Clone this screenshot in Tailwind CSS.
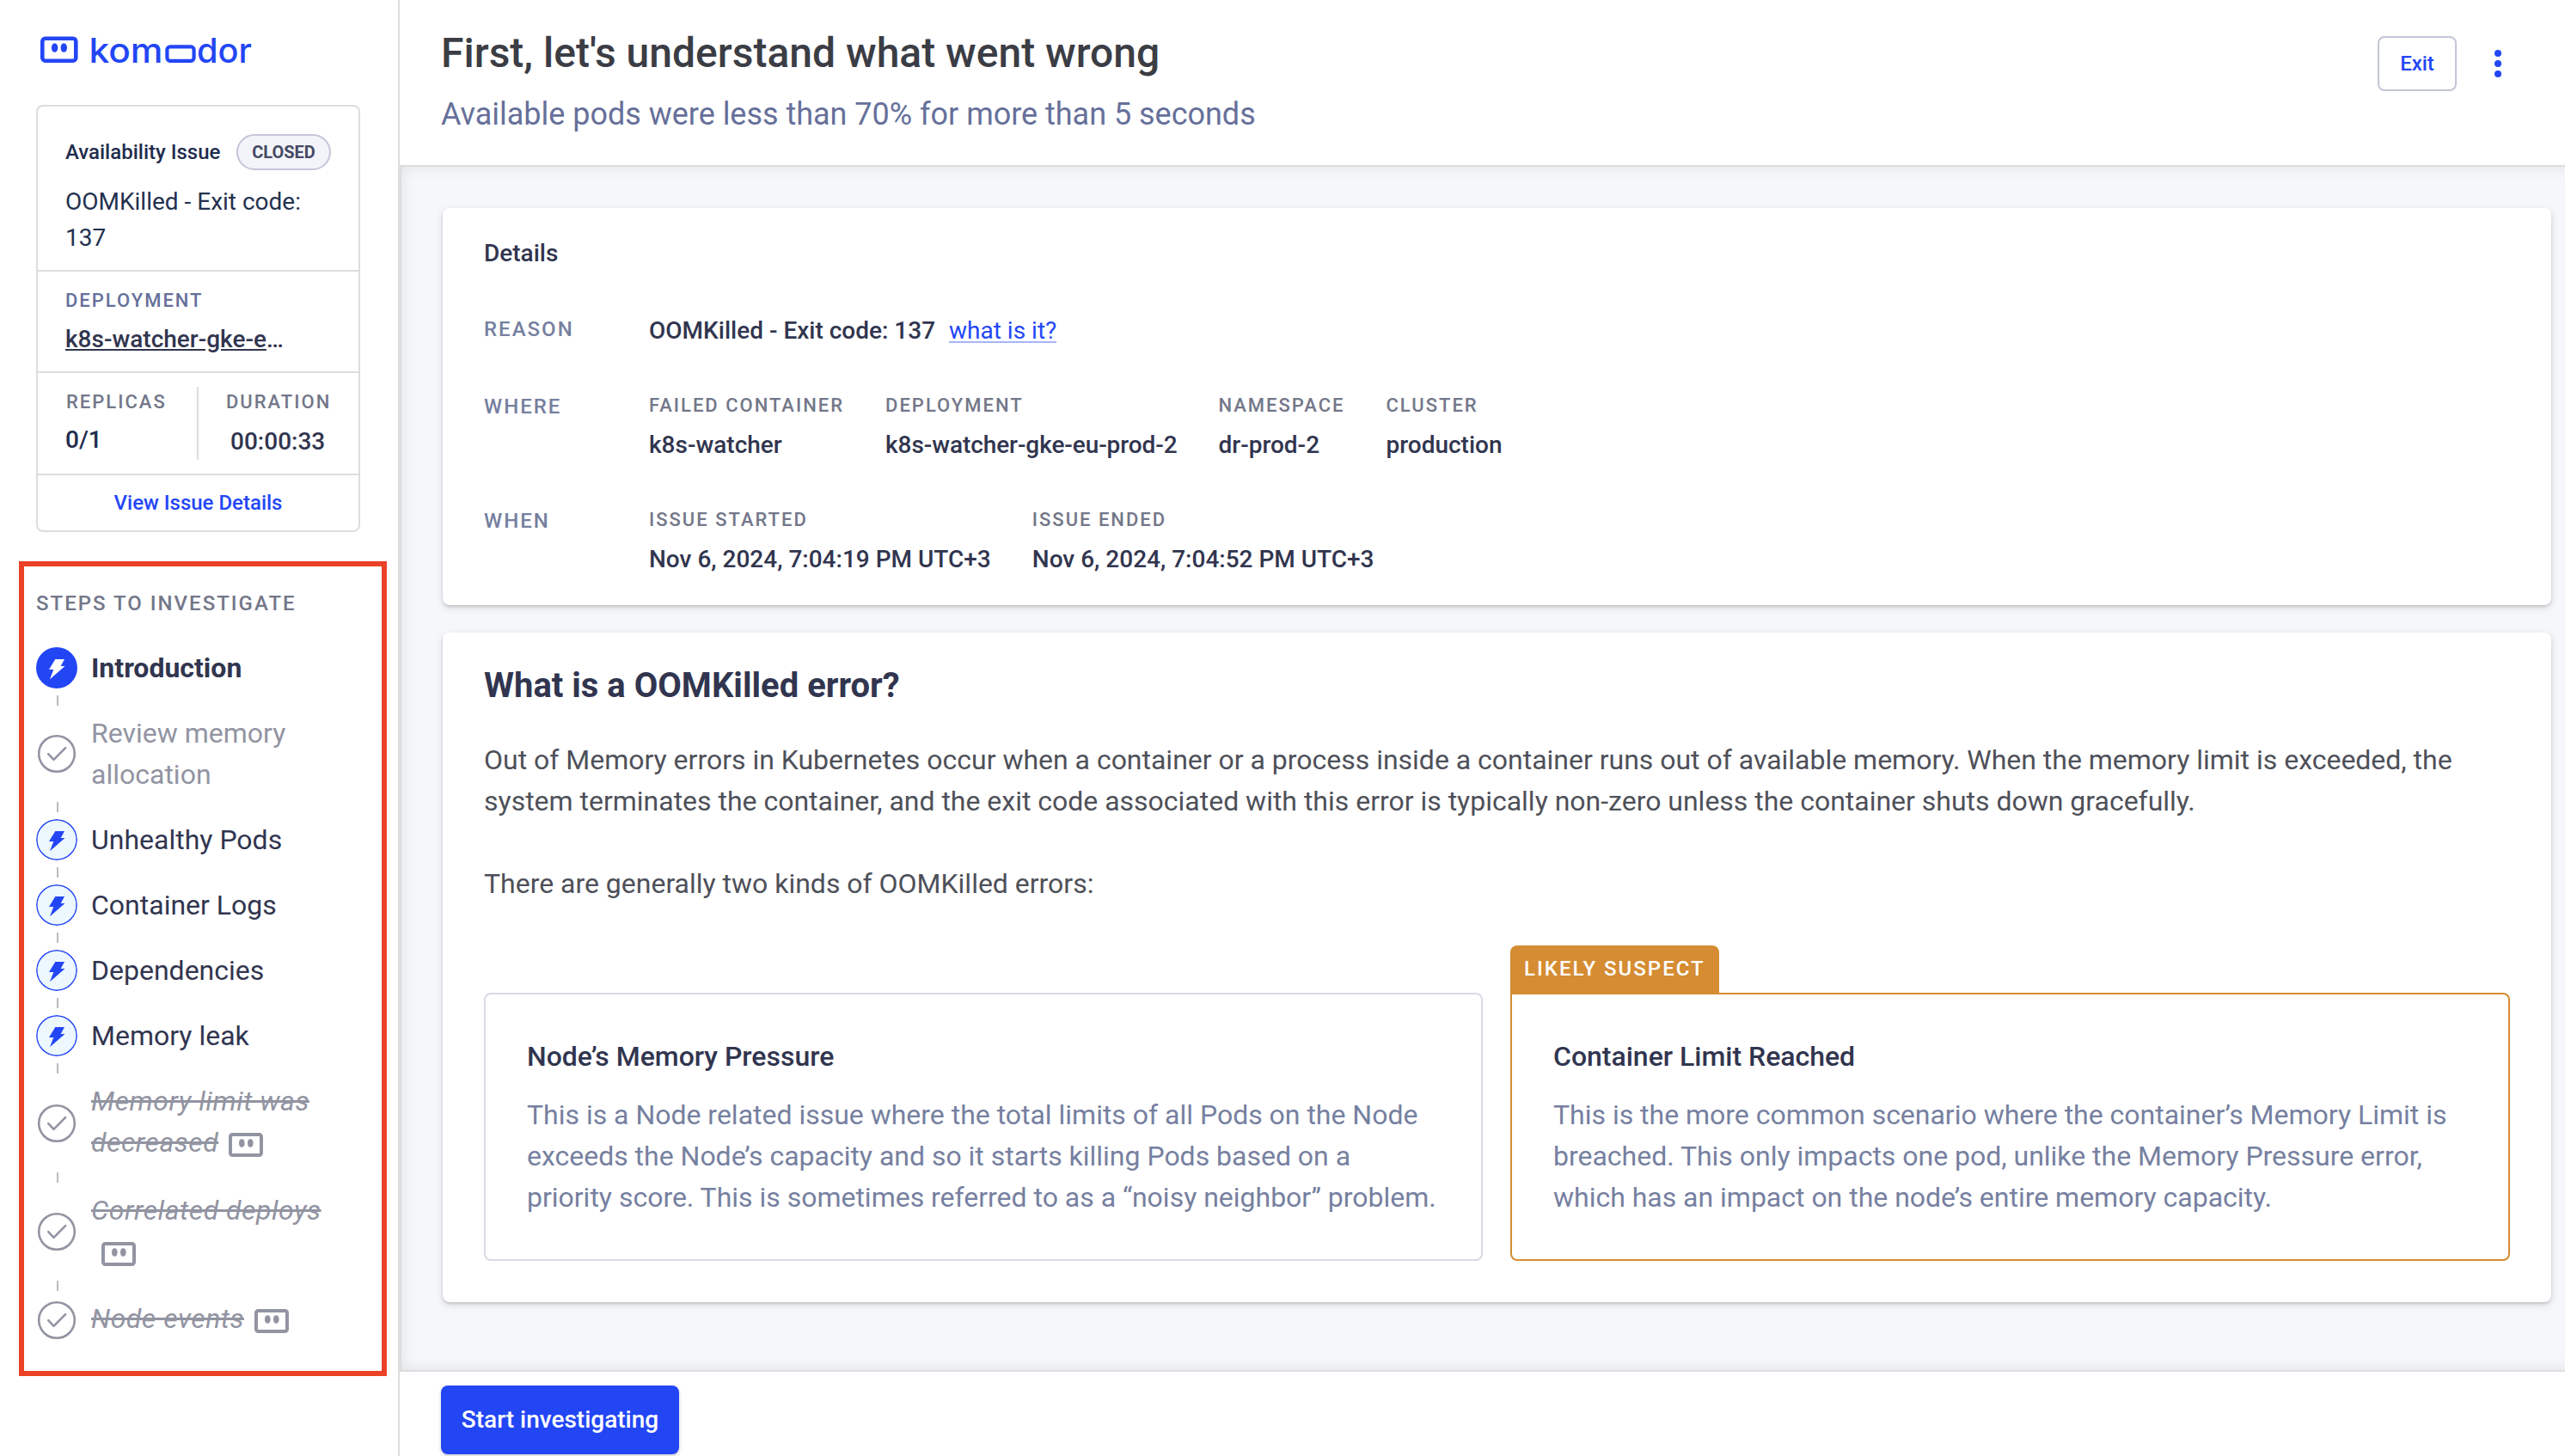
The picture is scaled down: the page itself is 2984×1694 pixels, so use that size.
<!DOCTYPE html>
<html lang="en">
<head>
  <meta charset="UTF-8" />
  <title>Komodor - OOMKilled</title>
  <script src="https://cdn.jsdelivr.net/npm/@tailwindcss/browser@4"></script>
</head>
<body class="bg-white h-[1694px] overflow-hidden flex font-['Roboto',sans-serif] text-[#31354f]">
  <!-- shared icons -->
  <svg class="hidden">
    <symbol id="bolt" viewBox="0 0 48 48"><path d="M22.3 14H33l-4.3 8h4.8L16 37.2l4.3-11.2H15z" fill="currentColor" /></symbol>
    <symbol id="bolt-open" viewBox="0 0 48 48">
      <circle cx="24" cy="24" r="23.2" fill="#ecf7fe" stroke="currentColor" stroke-width="1.5" />
      <path d="M22.3 14H33l-4.3 8h4.8L16 37.2l4.3-11.2H15z" fill="currentColor" />
    </symbol>
    <symbol id="check" viewBox="0 0 48 48">
      <circle cx="24" cy="24" r="20.8" fill="none" stroke="currentColor" stroke-width="2.6" />
      <path d="M14.2 24.2l6.3 6.6 13.6-13.6" fill="none" stroke="currentColor" stroke-width="2.6" stroke-linecap="round" stroke-linejoin="round" />
    </symbol>
    <symbol id="mask" viewBox="0 0 40 28">
      <rect x="2" y="2" width="36" height="24" rx="2.5" fill="none" stroke="currentColor" stroke-width="4" />
      <ellipse cx="15.3" cy="12" rx="3.3" ry="4.8" fill="currentColor" />
      <ellipse cx="25.3" cy="12" rx="3.3" ry="4.8" fill="currentColor" />
    </symbol>
  </svg>

  <aside class="w-[465px] shrink-0 border-r-2 border-[#dcdddf]">
    <div class="pt-[42px] pl-[47px] h-[122px]">
      <svg class="text-[#2346f5] overflow-visible" width="260" height="60" viewBox="0 0 260 60">
        <rect x="2.3" y="2.7" width="39" height="26" rx="3.5" fill="none" stroke="currentColor" stroke-width="4.6" />
        <ellipse cx="16.6" cy="13.5" rx="3.7" ry="5.3" fill="currentColor" />
        <ellipse cx="27.3" cy="13.5" rx="3.7" ry="5.3" fill="currentColor" />
        <g fill="currentColor" font-family="Inter, sans-serif" font-size="39" font-weight="500">
          <text x="56.5" y="30.5" textLength="86" lengthAdjust="spacingAndGlyphs">kom</text>
          <text x="182" y="30.5" textLength="64" lengthAdjust="spacingAndGlyphs">dor</text>
        </g>
        <rect x="147.4" y="12.4" width="31.2" height="16.4" rx="3.5" fill="none" stroke="currentColor" stroke-width="4.2" />
      </svg>
    </div>

    <div class="ml-[42px] w-[377px] h-[497px] border-2 border-[#dcdddf] rounded-lg">
      <div class="h-[192px] border-b-2 border-[#dcdddf] pt-8 pl-8">
        <div class="flex items-center justify-between pr-8">
          <span class="text-2xl leading-7 font-medium text-[#1f2c4d]">Availability Issue</span>
          <span class="w-[110px] h-[42px] rounded-full border-2 border-[#c4c6d8] bg-[#f3f4fa] flex items-center justify-center text-xl font-bold text-[#454a63]">CLOSED</span>
        </div>
        <div class="mt-4 text-[28px] leading-[42px] text-[#24314f]">OOMKilled - Exit code:<br />137</div>
      </div>
      <div class="h-[118px] border-b-2 border-[#dcdddf] pt-[21px] pl-8">
        <div class="text-[22px] leading-[26px] font-medium tracking-[2px] text-[#66709a]">DEPLOYMENT</div>
        <div class="mt-4 text-[28px] leading-8 font-medium"><span class="underline">k8s-watcher-gke-e</span>…</div>
      </div>
      <div class="h-[119px] border-b-2 border-[#dcdddf] pt-4 pl-8 flex">
        <div class="w-[153px] pt-[5px]">
          <div class="pl-px text-[22px] leading-[26px] font-medium tracking-[2px] text-[#737789]">REPLICAS</div>
          <div class="mt-[15px] text-[28px] leading-8 font-medium text-[#1f2c4d]">0/1</div>
        </div>
        <div class="h-[85px] border-l-2 border-[#dcdddf] pt-[5px] pl-8">
          <div class="text-[22px] leading-[26px] font-medium tracking-[2px] text-[#737789]">DURATION</div>
          <div class="mt-[17px] pl-[5px] text-[28px] leading-8 font-medium">00:00:33</div>
        </div>
      </div>
      <div class="h-16 flex items-center justify-center text-2xl leading-7 font-medium text-[#2346f5]">View Issue Details</div>
    </div>

    <div class="mt-[34px] ml-[22px] w-[428px] h-[948px] border-[6px] border-[#ea4127] pl-3.5 pt-[29px]">
      <div class="text-2xl leading-7 font-medium tracking-[2px] text-[#737789]">STEPS TO INVESTIGATE</div>
      <div id="steps" class="mt-[37px] text-[32px] leading-[48px]"></div>
    </div>
  </aside>

  <main class="flex-1 min-w-0 flex flex-col overflow-hidden">
    <header class="h-[192px] shrink-0 flex justify-between pl-12 pt-[34px]">
      <div>
        <h1 class="text-5xl leading-[56px] font-medium text-[#3b3d45]">First, let's understand what went wrong</h1>
        <p class="mt-[22px] text-4xl leading-[42px] tracking-[-0.02px] text-[#66709a]">Available pods were less than 70% for more than 5 seconds</p>
      </div>
      <div class="flex items-start pt-2 pr-[66px] gap-9">
        <button class="w-[92px] h-16 border-2 border-[#c2c6d6] rounded-lg text-2xl font-medium text-[#2346f5]">Exit</button>
        <svg class="mt-3 text-[#2346f5]" width="24" height="40" viewBox="0 0 24 40" fill="currentColor">
          <circle cx="12" cy="8" r="4" /><circle cx="12" cy="20" r="4" /><circle cx="12" cy="32" r="4" />
        </svg>
      </div>
    </header>

    <section class="h-[1404px] shrink-0 -mr-8 border-2 border-[#dcdddf] bg-[#f5f7fb] shadow-[inset_0_0_18px_rgba(0,0,0,0.09)] pl-12 pr-[46px] pt-12">
      <div class="h-[462px] bg-white rounded-lg shadow-[0_2px_3px_rgba(0,0,0,0.13),0_3px_10px_rgba(0,0,0,0.12)] px-12 pt-[37px]">
        <h2 class="text-[28px] leading-8 font-medium">Details</h2>
        <div class="mt-[58px] flex">
          <div class="w-[192px] text-2xl leading-7 font-medium tracking-[2px] text-[#7680a0]">REASON</div>
          <div class="text-[28px] leading-8 font-medium">OOMKilled - Exit code: 137</div>
          <a class="ml-4 h-[30px] border-b-2 border-[#a7b5fb] text-[28px] leading-8 text-[#2346f5]">what is it?</a>
        </div>
        <div class="mt-[58px] flex">
          <div class="w-[192px] text-2xl leading-7 font-medium tracking-[2px] text-[#7680a0]">WHERE</div>
          <div class="flex gap-12">
            <div>
              <div class="text-[22px] leading-[26px] font-medium tracking-[2px] text-[#737789]">FAILED CONTAINER</div>
              <div class="mt-[17px] text-[28px] leading-8 font-medium">k8s-watcher</div>
            </div>
            <div>
              <div class="text-[22px] leading-[26px] font-medium tracking-[2px] text-[#737789]">DEPLOYMENT</div>
              <div class="mt-[17px] text-[28px] leading-8 font-medium tracking-[-0.08px]">k8s-watcher-gke-eu-prod-2</div>
            </div>
            <div>
              <div class="text-[22px] leading-[26px] font-medium tracking-[2px] text-[#737789]">NAMESPACE</div>
              <div class="mt-[17px] text-[28px] leading-8 font-medium">dr-prod-2</div>
            </div>
            <div>
              <div class="text-[22px] leading-[26px] font-medium tracking-[2px] text-[#737789]">CLUSTER</div>
              <div class="mt-[17px] text-[28px] leading-8 font-medium">production</div>
            </div>
          </div>
        </div>
        <div class="mt-[58px] flex">
          <div class="w-[192px] text-2xl leading-7 font-medium tracking-[2px] text-[#7680a0]">WHEN</div>
          <div class="flex gap-12">
            <div>
              <div class="text-[22px] leading-[26px] font-medium tracking-[2px] text-[#737789]">ISSUE STARTED</div>
              <div class="mt-[17px] text-[28px] leading-8 font-medium">Nov 6, 2024, 7:04:19 PM UTC+3</div>
            </div>
            <div>
              <div class="text-[22px] leading-[26px] font-medium tracking-[2px] text-[#737789]">ISSUE ENDED</div>
              <div class="mt-[17px] text-[28px] leading-8 font-medium">Nov 6, 2024, 7:04:52 PM UTC+3</div>
            </div>
          </div>
        </div>
      </div>

      <div class="mt-8 h-[779px] bg-white rounded-lg shadow-[0_2px_3px_rgba(0,0,0,0.13),0_3px_10px_rgba(0,0,0,0.12)] px-12 pt-[38px]">
        <h2 class="text-[40px] leading-[48px] font-bold">What is a OOMKilled error?</h2>
        <div class="mt-[38px] text-[32px] leading-[48px] tracking-[-0.013px] text-[#4e5059]">
          <p>Out of Memory errors in Kubernetes occur when a container or a process inside a container runs out of available memory. When the memory limit is exceeded, the<br />system terminates the container, and the exit code associated with this error is typically non-zero unless the container shuts down gracefully.</p>
          <p class="mt-12">There are generally two kinds of OOMKilled errors:</p>
        </div>
        <div class="mt-12 grid grid-cols-[1162px_1fr] gap-8 items-end text-[32px] leading-[48px] tracking-[-0.013px]">
          <div class="border-2 border-[#d8dbe4] rounded-lg p-12 pr-0">
            <h3 class="font-medium">Node’s Memory Pressure</h3>
            <p class="mt-5 text-[#7680a0]">This is a Node related issue where the total limits of all Pods on the Node<br />exceeds the Node’s capacity and so it starts killing Pods based on a<br />priority score. This is sometimes referred to as a “noisy neighbor” problem.</p>
          </div>
          <div>
            <div class="w-[243px] h-[55px] bg-[#d58c32] rounded-t-lg pl-4 pt-[13px] text-2xl leading-7 font-medium tracking-[2px] text-white">LIKELY SUSPECT</div>
            <div class="border-2 border-[#d58c32] rounded-lg rounded-tl-none p-12 pr-0">
              <h3 class="font-medium">Container Limit Reached</h3>
              <p class="mt-5 text-[#7680a0]">This is the more common scenario where the container’s Memory Limit is<br />breached. This only impacts one pod, unlike the Memory Pressure error,<br />which has an impact on the node’s entire memory capacity.</p>
            </div>
          </div>
        </div>
      </div>
    </section>

    <footer class="pl-12 pt-4">
      <button class="w-[277px] h-20 bg-[#2346f5] rounded-lg text-[28px] font-medium text-white shadow-[0_2px_4px_rgba(0,0,0,0.2)]">Start investigating</button>
    </footer>
  </main>

  <script>
    const steps = [
      { title: "Introduction", state: "active", height: 48 },
      { title: "Review memory<br />allocation", state: "done", height: 96 },
      { title: "Unhealthy Pods", state: "open", height: 48 },
      { title: "Container Logs", state: "open", height: 48 },
      { title: "Dependencies", state: "open", height: 48 },
      { title: "Memory leak", state: "open", height: 48 },
      { title: "Memory limit was<br />decreased", state: "skipped", height: 99 },
      { title: "Correlated deploys", state: "skipped", height: 98, wrap: true },
      { title: "Node events", state: "skipped", height: 52 },
    ];

    const icons = { active: "bolt", open: "bolt-open", done: "check", skipped: "check" };
    const circles = {
      active: "bg-[#2346f5] text-white",
      open: "text-[#2346f5]",
      done: "text-[#9294a2]",
      skipped: "text-[#9294a2]",
    };
    const labels = {
      active: "font-bold",
      open: "",
      done: "text-[#9294a2]",
      skipped: "text-[#9294a2]",
    };

    document.getElementById("steps").innerHTML = steps.map((s, i) => {
      const title = s.state === "skipped"
        ? `<span class="italic line-through tracking-[0.5px]">${s.title}</span>${s.wrap ? "<br />" : ""}<svg class="inline-block w-10 h-7 ml-3 align-[-6px]"><use href="#mask" /></svg>`
        : s.title;
      const line = i < steps.length - 1 ? `<div class="w-0.5 h-3 my-2 ml-6 bg-[#bbbcbe]"></div>` : "";
      return `<div class="flex gap-4" style="height: ${s.height}px">
        <svg class="self-center size-12 shrink-0 rounded-full ${circles[s.state]}"><use href="#${icons[s.state]}" /></svg>
        <div class="whitespace-nowrap ${labels[s.state]}">${title}</div>
      </div>${line}`;
    }).join("");
  </script>
</body>
</html>
